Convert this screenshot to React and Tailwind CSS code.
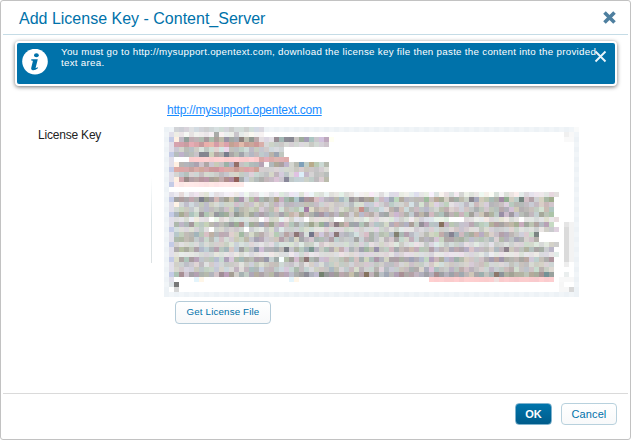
const CELL = 5;
const COLS = 83;
const ROWS = 34;

// Spans of one mosaic row: [row, first column, last column, [r, g, b], variation]
const SPANS = [
  [0, 2, 19, [212, 217, 219], 14],
  [1, 2, 19, [238, 236, 236], 12],
  [2, 3, 18, [170, 168, 166], 32],
  [2, 19, 21, [216, 214, 218], 14],
  [2, 22, 32, [184, 182, 184], 38],
  [3, 2, 19, [214, 166, 164], 20],
  [3, 20, 32, [208, 208, 208], 18],
  [4, 2, 23, [206, 206, 206], 28],
  [5, 2, 23, [182, 184, 186], 32],
  [6, 5, 18, [254, 207, 208], 4],
  [6, 19, 24, [220, 172, 172], 14],
  [7, 3, 32, [184, 186, 186], 32],
  [7, 20, 20, [250, 250, 250], 3],
  [8, 2, 18, [212, 164, 162], 18],
  [8, 19, 32, [208, 207, 207], 16],
  [9, 2, 32, [200, 200, 202], 24],
  [10, 3, 14, [182, 156, 156], 28],
  [10, 15, 32, [192, 191, 192], 28],
  [11, 2, 15, [255, 232, 231], 4],
  [13, 2, 78, [232, 232, 232], 20],
  [14, 3, 77, [180, 180, 178], 40],
  [15, 3, 77, [202, 202, 201], 26],
  [16, 2, 77, [196, 196, 194], 30],
  [17, 2, 77, [180, 179, 179], 34],
  [18, 2, 78, [226, 226, 224], 20],
  [19, 2, 77, [182, 180, 179], 36],
  [20, 2, 78, [214, 214, 213], 20],
  [21, 2, 74, [192, 190, 190], 34],
  [22, 2, 74, [190, 190, 189], 28],
  [23, 2, 78, [216, 217, 216], 20],
  [24, 2, 77, [184, 184, 183], 36],
  [25, 2, 78, [226, 224, 226], 16],
  [26, 2, 77, [184, 184, 184], 34],
  [27, 2, 77, [207, 207, 206], 20],
  [28, 2, 77, [197, 197, 199], 28],
  [29, 2, 77, [176, 174, 173], 34],
  [30, 53, 65, [252, 205, 206], 4],
  [30, 66, 66, [238, 224, 224], 4],
  [30, 67, 77, [252, 205, 206], 4],
  [31, 2, 2, [120, 120, 120], 0],
  [31, 1, 1, [222, 228, 232], 0],
  [32, 2, 2, [214, 214, 214], 0],
  [1, 80, 80, [240, 240, 240], 0],
  [1, 81, 81, [248, 248, 248], 0],
  [2, 80, 81, [249, 249, 249], 0],
  [27, 80, 80, [238, 238, 238], 0],
  [29, 80, 80, [234, 238, 238], 0],
  [30, 79, 81, [248, 248, 248], 0],
  [31, 79, 79, [246, 246, 246], 0],
  [32, 79, 80, [247, 247, 247], 0],
  [32, 81, 81, [216, 216, 216], 0],
];

// Single cells that stand out: [row, column, colour]
const ACCENTS = [
  [1, 10, "#a9aba8"], [1, 14, "#c9c5cb"],
  [2, 2, "#fff0e2"], [2, 15, "#8d827e"], [2, 24, "#8c8b95"], [2, 25, "#898993"], [2, 32, "#bea8bd"], [2, 33, "#fffff2"],
  [5, 7, "#84858f"], [5, 8, "#85868f"], [5, 12, "#777d8c"],
  [7, 2, "#fff0e2"], [7, 14, "#946f68"], [7, 27, "#7ea0ba"], [7, 29, "#b9ab8b"],
  [9, 26, "#e0c2e2"], [9, 27, "#dceef8"], [10, 2, "#fff0e2"], [10, 14, "#925f58"], [10, 24, "#89889a"],
  [14, 2, "#a3a3a3"], [14, 7, "#7d7f8d"], [14, 45, "#a0aab5"], [14, 61, "#8b8790"], [14, 71, "#758580"],
  [15, 2, "#fff3e6"], [15, 49, "#d4e2e6"], [16, 28, "#a37ea4"], [16, 39, "#c78f8a"],
  [18, 9, "#ffffff"], [18, 19, "#ffffff"], [18, 28, "#ffffff"], [18, 34, "#ffffff"], [18, 35, "#ffffff"],
  [18, 57, "#ffffff"], [18, 58, "#ffffff"], [18, 59, "#ffffff"], [18, 71, "#ffffff"],
  [19, 34, "#8c7b82"], [19, 55, "#87715f"], [20, 9, "#ffffff"], [20, 16, "#ffffff"],
  [21, 26, "#8d7676"], [21, 29, "#73758a"], [21, 34, "#8b7777"], [21, 46, "#828170"], [21, 57, "#858392"], [21, 74, "#7b8583"],
  [24, 24, "#777c84"], [24, 29, "#7b9790"], [24, 68, "#8c808b"], [26, 28, "#8e7675"], [26, 23, "#f8ffff"],
  [29, 31, "#748270"], [29, 40, "#85735e"], [29, 66, "#8d786c"], [29, 76, "#739296"],
  [30, 6, "#e4f4fb"], [30, 7, "#fff6e8"], [30, 25, "#e4f4fb"], [30, 26, "#fff6e8"],
];

const EDGE = ["#edf2f6", "#f1f5f8"];

function noise(n) {
  const v = Math.sin(n * 12.9898 + 4.137) * 43758.5453;
  return (v - Math.floor(v)) * 2 - 1;
}

function buildMosaic() {
  const cells = new Map();
  const put = (r, c, fill) => cells.set(r * COLS + c, { r, c, fill });

  for (let r = 0; r < ROWS; r++) {
    put(r, 0, EDGE[r % 2]);
    put(r, COLS - 1, EDGE[r % 2]);
    if (r > 0 && r < 31 && r !== 12) put(r, 1, r % 3 === 2 ? "#c4cbe6" : "#e1dfea");
  }
  for (let c = 0; c < COLS; c++) {
    put(0, c, EDGE[c % 2]);
    put(ROWS - 1, c, EDGE[c % 2]);
  }
  put(0, COLS - 1, "#f9fafa");
  for (let r = 19; r < 27; r++) {
    put(r, 80, r === 19 ? "#e5e5e5" : "#dbdbdb");
    put(r, 81, "#f3f3f3");
  }
  SPANS.forEach(([r, from, to, rgb, vary]) => {
    for (let c = from; c <= to; c++) {
      const seed = r * 97 + c * 7;
      const light = noise(seed) * vary * 0.7;
      const tint = rgb.map((v, i) =>
        Math.max(90, Math.min(255, Math.round(v + light + noise(seed + 1000 * (i + 1)) * vary * 0.42)))
      );
      put(r, c, `rgb(${tint.join(",")})`);
    }
  });
  ACCENTS.forEach(([r, c, fill]) => put(r, c, fill));
  return [...cells.values()];
}

const MOSAIC = buildMosaic();

function KeyMosaic() {
  return (
    <svg className="block" width={415} height={170} shapeRendering="crispEdges" aria-hidden="true">
      {MOSAIC.map(({ r, c, fill }) => (
        <rect key={`${r}-${c}`} x={c * CELL} y={r * CELL} width={CELL} height={CELL} fill={fill} />
      ))}
    </svg>
  );
}

function InfoIcon() {
  return (
    <svg className="mt-[6px] ml-[5px] shrink-0" width="26" height="26" viewBox="0 0 26 26" aria-hidden="true">
      <circle cx="13" cy="12.6" r="12.8" fill="#fff" />
      <ellipse cx="14.4" cy="6.3" rx="2.4" ry="2" fill="#0072aa" />
      <path d="M9.3 10.2h6.5l-2.1 8.2c-.2.9.2 1 1.9-.1l.5.8c-2 1.700-3.700 2.200-5.100 2.100-1.700-.1-2.100-1.200-1.700-2.700l1.500-6.100c.1-.7-.2-.9-1.700-.9z" fill="#0072aa" />
    </svg>
  );
}

function Cross({ size, color, weight }) {
  return (
    <svg className="block" width={size} height={size} viewBox="0 0 13 13" aria-hidden="true">
      <path d="M1.500 1.500l10 10M11.500 1.500l-10 10" stroke={color} strokeWidth={weight} fill="none" />
    </svg>
  );
}

export default function App() {
  return (
    <div className="flex h-[440px] w-[631px] flex-col rounded-[3px] border border-[#c2c2c2] bg-white px-[2px] font-['Liberation_Sans',Arial,sans-serif]">
      <header className="flex h-[34px] shrink-0 items-start justify-between border-b border-[#c5dce6] pr-[12px] pl-4">
        <h1 className="mt-[8px] text-[16px] leading-5 whitespace-nowrap text-[#0072aa]">Add License Key - Content_Server</h1>
        <button aria-label="Close dialog" className="mt-[10px]">
          <Cross size={13} color="#4e7f9f" weight={3.6} />
        </button>
      </header>

      <div className="mt-[6px] ml-[12px] flex h-[45px] w-[602px] shrink-0 items-start rounded-[4px] border-2 border-white bg-[#0072aa] shadow-[0_1px_4px_rgba(0,0,0,0.55)]">
        <InfoIcon />
        <p className="mt-[3px] ml-[13px] w-[540px] shrink-0 text-[9.75px] leading-[11px] tracking-[0.285px] text-white">
          <span className="whitespace-nowrap">You must go to http://mysupport.opentext.com, download the license key file then paste the content into the provided</span>
          <br />
          text area.
        </p>
        <button aria-label="Close message" className="mt-[7px] -ml-[7px] shrink-0">
          <Cross size={13} color="#e8f5fb" weight={1.9} />
        </button>
      </div>

      <main className="flex min-h-0 flex-1">
        <div className="w-[148px] shrink-0">
          <label className="mt-[41px] ml-[35px] block text-[12px] leading-4 tracking-[-0.2px] whitespace-nowrap text-[#222]">License Key</label>
        </div>
        <div className="mt-[91px] h-[86px] w-px shrink-0 bg-linear-to-b from-white via-[#dbe4e7] to-[#dde2e4]" />
        <div className="ml-[12px] flex flex-col items-start">
          <a className="mt-[16px] ml-[3px] text-[12px] leading-4 tracking-[-0.23px] text-[#1a8cff] underline">http://mysupport.opentext.com</a>
          <div className="mt-[9px]">
            <KeyMosaic />
          </div>
          <button className="mt-[4px] ml-[11px] h-[23px] w-[96px] rounded-[4px] border border-[#b4cbd8] bg-linear-to-b from-white to-[#f7f8f9] text-[9.75px] tracking-[0.15px] whitespace-nowrap text-[#0072aa]">
            Get License File
          </button>
        </div>
      </main>

      <footer className="flex h-[46px] shrink-0 justify-end gap-[9px] border-t border-[#dadada] pt-[9px] pr-[11px]">
        <button className="h-[22px] w-[37px] rounded-[4px] border border-[#7fb3ce] bg-linear-to-b from-[#0074ab] to-[#005c8b] text-[11px] font-bold text-white">
          OK
        </button>
        <button className="h-[22px] w-[56px] rounded-[4px] border border-[#b8d1dd] bg-linear-to-b from-white to-[#f8f9fa] text-[11px] tracking-[0.1px] text-[#0072aa]">
          Cancel
        </button>
      </footer>
    </div>
  );
}
